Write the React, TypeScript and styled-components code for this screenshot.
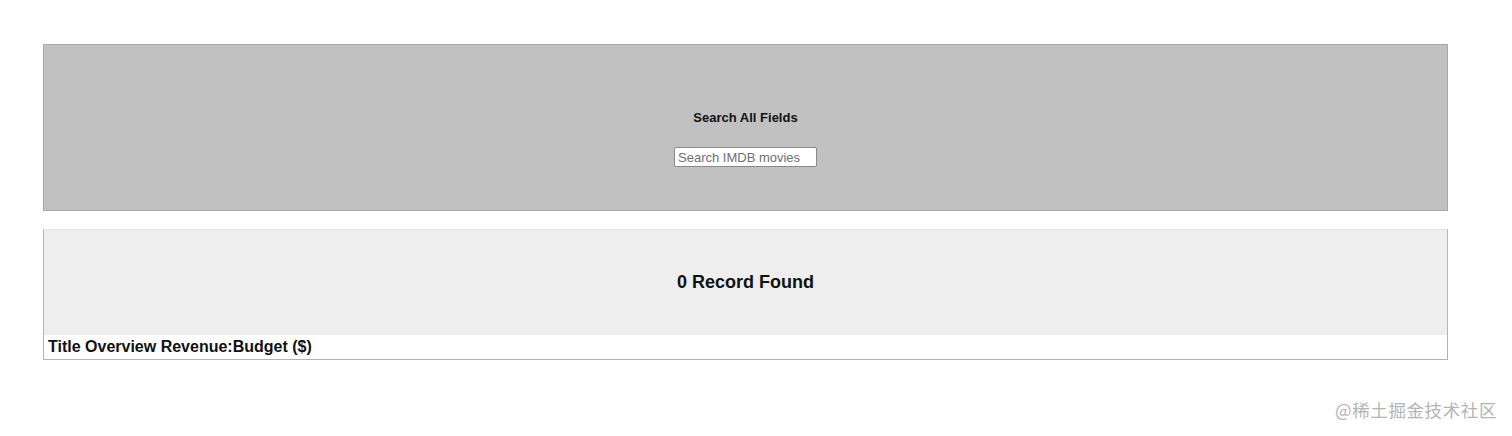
import { createGlobalStyle, styled } from 'styled-components';

const GlobalStyle = createGlobalStyle`
  html, body {
    margin: 0;
    padding: 0;
    background: #ffffff;
    font-family: "Liberation Sans", Arial, sans-serif;
  }
`;

const Page = styled.div`
  width: 1512px;
  height: 436px;
  box-sizing: border-box;
  padding: 44px 64px 0 43px;
  display: flex;
  flex-direction: column;
  gap: 18px;
  position: relative;
`;

const SearchPanel = styled.section`
  height: 167px;
  box-sizing: border-box;
  background: #c1c1c1;
  border: 1px solid #a9a9a9;
  display: flex;
  flex-direction: column;
  align-items: center;
  padding-top: 65px;
`;

const SearchLabel = styled.h4`
  margin: 0;
  font-size: 13px;
  font-weight: 700;
  color: #111;
  line-height: 15px;
`;

const SearchInput = styled.input`
  margin-top: 22px;
  width: 143px;
  height: 20px;
  box-sizing: border-box;
  border: 1px solid #8a8a8a;
  border-radius: 2px;
  padding: 0 3px;
  font-family: "Liberation Sans", Arial, sans-serif;
  font-size: 13px;
  color: #222;
  background: #fff;

  &::placeholder {
    color: #6f6f6f;
  }
`;

const ResultPanel = styled.section`
  box-sizing: border-box;
  border: 1px solid #b3b3b3;
  border-top-color: #e6e6e6;
`;

const ResultHeader = styled.div`
  height: 105px;
  background: #eeeeee;
  display: flex;
  align-items: center;
  justify-content: center;
`;

const ResultCount = styled.h2`
  margin: 0;
  font-size: 18px;
  font-weight: 700;
  color: #111;
`;

const Table = styled.table`
  width: 100%;
  border-collapse: collapse;
`;

const HeadCell = styled.th`
  text-align: left;
  padding: 2px 4px 3px;
  font-size: 16px;
  font-weight: 700;
  color: #111;
  line-height: 19px;
`;

const Watermark = styled.div`
  position: absolute;
  right: 15px;
  bottom: 14px;
  font-family: "Noto Sans CJK SC", "Liberation Sans", sans-serif;
  font-size: 17.5px;
  color: #b4b4b4;
  letter-spacing: 0.6px;
`;

const App = () => {
  return (
    <>
      <GlobalStyle />
      <Page>
        <SearchPanel>
          <SearchLabel>Search All Fields</SearchLabel>
          <SearchInput placeholder="Search IMDB movies" />
        </SearchPanel>
        <ResultPanel>
          <ResultHeader>
            <ResultCount>0 Record Found</ResultCount>
          </ResultHeader>
          <Table>
            <thead>
              <tr>
                <HeadCell>Title Overview Revenue:Budget ($)</HeadCell>
              </tr>
            </thead>
          </Table>
        </ResultPanel>
        <Watermark>@稀土掘金技术社区</Watermark>
      </Page>
    </>
  );
};

export default App;
